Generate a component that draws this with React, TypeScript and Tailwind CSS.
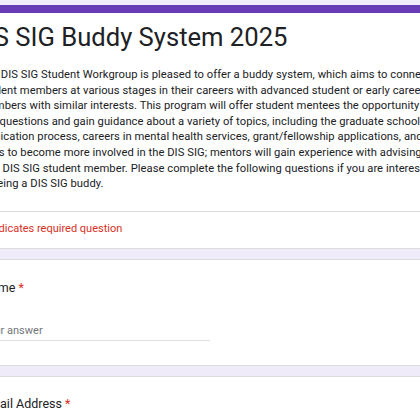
import type { ReactNode } from 'react';

const descriptionLines = [
  'The DIS SIG Student Workgroup is pleased to offer a buddy system, which aims to connect',
  'student members at various stages in their careers with advanced student or early career',
  'members with similar interests. This program will offer student mentees the opportunity to',
  'ask questions and gain guidance about a variety of topics, including the graduate school',
  'application process, careers in mental health services, grant/fellowship applications, and',
  'ways to become more involved in the DIS SIG; mentors will gain experience with advising a',
  'new DIS SIG student member. Please complete the following questions if you are interested',
  'in being a DIS SIG buddy.',
];

function Card({ children, className = '' }: { children: ReactNode; className?: string }) {
  return (
    <div className={`bg-white border border-[#dadce0] rounded-lg ${className}`}>{children}</div>
  );
}

function QuestionTitle({ label }: { label: string }) {
  return (
    <div className="text-[12.5px] leading-[18px] text-[#202124]">
      {label} <span className="text-[#d93025]">*</span>
    </div>
  );
}

export default function App() {
  return (
    <div
      className="w-[420px] h-[420px] overflow-hidden bg-[#f0ebf8]"
      style={{ fontFamily: 'Roboto, "Liberation Sans", sans-serif' }}
    >
      <div className="ml-[-38px] w-[496px] pt-[5px] flex flex-col gap-[10px]">
        {/* Header */}
        <div className="bg-white border border-t-0 border-[#dadce0] rounded-lg overflow-hidden">
          <div className="h-[8px] bg-[#673ab7]" />
          <div className="px-[19px] pt-[7px] pb-[19px] border-b border-[#dadce0]">
            <h1 className="text-[25.6px] leading-[34px] text-[#202124] ml-[-12px] whitespace-nowrap">
              DIS SIG Buddy System 2025
            </h1>
            <div className="mt-[13px] ml-[-3px] text-[11.2px] leading-[15.6px] tracking-[0.05px] text-[#202124] whitespace-nowrap">
              {descriptionLines.map((line) => (
                <div key={line}>{line}</div>
              ))}
            </div>
          </div>
          <div className="px-[19px] pt-[9px] pb-[12px] text-[11px] leading-[15.6px] text-[#d93025]">
            * Indicates required question
          </div>
        </div>

        {/* Name */}
        <Card className="px-[19px] pt-[19px] pb-[24px]">
          <QuestionTitle label="Name" />
          <div className="mt-[26px] w-1/2 border-b border-[#e0e0e0] pb-[1px] text-[11px] leading-[15.6px] text-[#70757a]">
            Your answer
          </div>
        </Card>

        {/* Email */}
        <Card className="px-[19px] pt-[18px] pb-[24px]">
          <QuestionTitle label="Email Address" />
          <div className="mt-[26px] w-1/2 border-b border-[#e0e0e0] pb-[1px] text-[11px] leading-[15.6px] text-[#70757a]">
            Your answer
          </div>
        </Card>
      </div>
    </div>
  );
}
